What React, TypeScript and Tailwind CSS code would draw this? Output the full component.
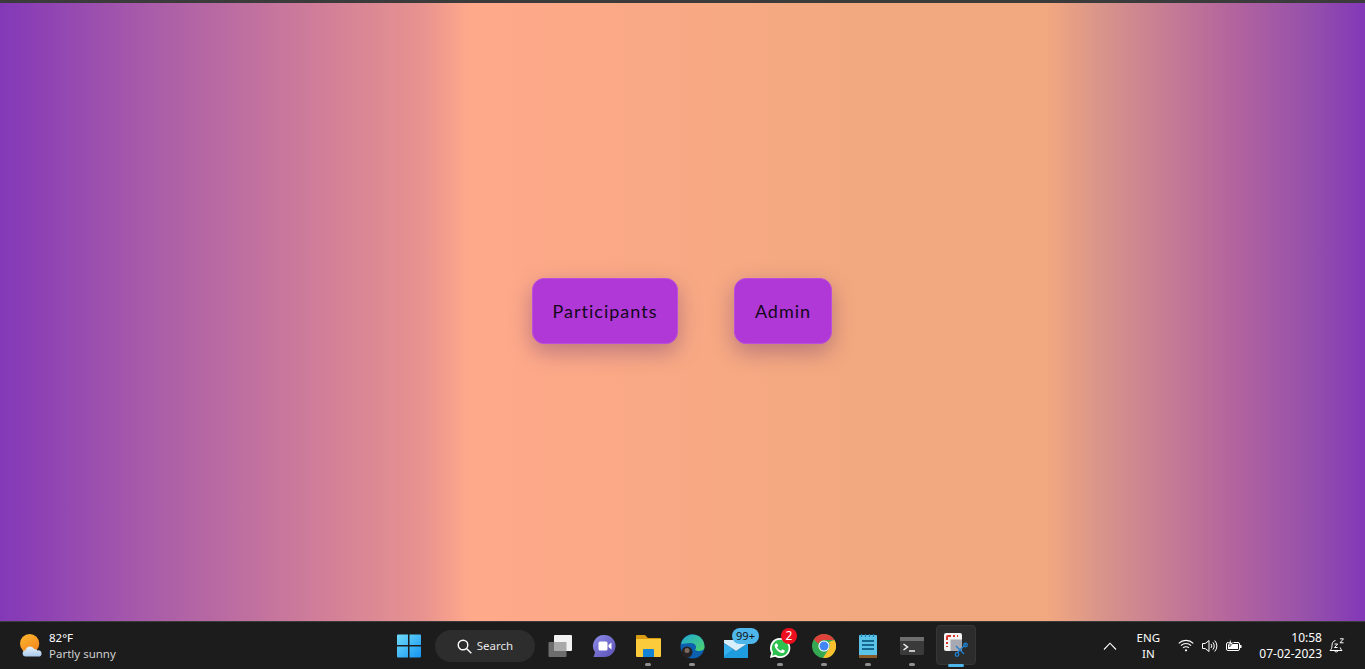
const font = { fontFamily: '"Noto Sans", sans-serif' };

function Dot() {
    return <span className="absolute bottom-[4px] left-1/2 -translate-x-1/2 w-[6px] h-[3px] rounded-full bg-[#8f8f8f]" />;
}

function Slot({ children, running = true }: { children: React.ReactNode; running?: boolean }) {
    return (
        <div className="relative w-11 h-12 flex items-center justify-center">
            {children}
            {running && <Dot />}
        </div>
    );
}

function Weather() {
    return (
        <svg width="22" height="23" viewBox="0 0 24 25">
            <defs>
                <linearGradient id="sun" x1="0" y1="0" x2="0.6" y2="1">
                    <stop offset="0" stopColor="#fdb92e" />
                    <stop offset="1" stopColor="#f5861f" />
                </linearGradient>
                <linearGradient id="cloud" x1="0" y1="0" x2="0" y2="1">
                    <stop offset="0" stopColor="#e8f3fc" />
                    <stop offset="1" stopColor="#a9c9ea" />
                </linearGradient>
            </defs>
            <circle cx="10.500" cy="10.500" r="10.500" fill="url(#sun)" />
            <path d="M6.500 24.500a3.400 3.400 0 0 1-.4-6.800 5 5 0 0 1 9.400-1.400 4.200 4.200 0 0 1 3.400 1.600 3.300 3.300 0 0 1 4.600 3.200 3.300 3.300 0 0 1-3.300 3.400z" fill="url(#cloud)" />
        </svg>
    );
}

function WinLogo() {
    return (
        <svg width="24" height="24" viewBox="0 0 24 24">
            <defs>
                <linearGradient id="win" x1="0" y1="0" x2="1" y2="1">
                    <stop offset="0" stopColor="#6fdcfb" />
                    <stop offset="1" stopColor="#1594f2" />
                </linearGradient>
            </defs>
            <path d="M1 0.500h10v10.500H0V1.500a1 1 0 0 1 1-1zM12.500 0.500H23a1 1 0 0 1 1 1V11H12.500zM0 12.500h11V23.500H1a1 1 0 0 1-1-1zM12.500 12.500H24V22.500a1 1 0 0 1-1 1H12.500z" fill="url(#win)" />
        </svg>
    );
}

function TaskView() {
    return (
        <svg width="24" height="22" viewBox="0 0 24 22">
            <rect x="0.500" y="7" width="18" height="15" rx="1" fill="#6d6d6d" />
            <rect x="6" y="0" width="18" height="16" rx="1" fill="#f2f2f2" />
            <rect x="6" y="7" width="12.500" height="9" fill="#a9a9a9" />
        </svg>
    );
}

function Meet() {
    return (
        <svg width="24" height="24" viewBox="0 0 24 24">
            <defs>
                <linearGradient id="meet" x1="0" y1="0" x2="1" y2="1">
                    <stop offset="0" stopColor="#8d8ce8" />
                    <stop offset="1" stopColor="#5a4fb5" />
                </linearGradient>
            </defs>
            <path d="M12.500 1a11 11 0 1 1 0 22H1.500l1.600-4.500A11 11 0 0 1 12.500 1z" fill="url(#meet)" />
            <rect x="6.500" y="7.500" width="9" height="9" rx="1.500" fill="#fff" />
            <path d="M16.500 11l3-2.500v7l-3-2.500z" fill="#fff" />
        </svg>
    );
}

function Folder() {
    return (
        <svg width="25" height="22" viewBox="0 0 25 22">
            <path d="M1 0h8l3 3h12a1 1 0 0 1 1 1v3H0V1a1 1 0 0 1 1-1z" fill="#d99c12" />
            <path d="M0 4h25v17a1 1 0 0 1-1 1H1a1 1 0 0 1-1-1z" fill="#fbcb3c" />
            <path d="M7 15a1 1 0 0 1 1-1h9a1 1 0 0 1 1 1v7H7z" fill="#1283d4" />
        </svg>
    );
}

function Edge() {
    return (
        <svg width="25" height="25" viewBox="0 0 25 25">
            <defs>
                <linearGradient id="edge" x1="0" y1="0" x2="1" y2="1">
                    <stop offset="0" stopColor="#1fa6d6" />
                    <stop offset="1" stopColor="#4fd46a" />
                </linearGradient>
            </defs>
            <circle cx="12.500" cy="12.500" r="12" fill="#0d5fb0" />
            <path d="M1 10C3 3 8 .5 12.500 .5 20 .5 24.500 6 24.500 13c0 3-3 4-6 4-2 0-4-1-3-2 2-3-1-6-5-6-4 0-7 1-9.500 1z" fill="url(#edge)" />
            <circle cx="7" cy="18" r="5.500" fill="#262222" />
            <circle cx="7" cy="16.500" r="2.500" fill="#7a6a60" />
        </svg>
    );
}

function Mail() {
    return (
        <svg width="24" height="18" viewBox="0 0 24 18">
            <path d="M0 3l12 8 12-8v15H0z" fill="#1f9be0" />
            <path d="M0 0h24v3L12 11 0 3z" fill="#d8eefb" />
            <path d="M0 4l9 5-9 7z" fill="#39b0ee" />
        </svg>
    );
}

function WhatsApp() {
    return (
        <svg width="22" height="22" viewBox="0 0 24 24">
            <path d="M12 1a11 11 0 0 0-9.500 16.500L1 23l5.700-1.500A11 11 0 1 0 12 1z" fill="#fff" />
            <path d="M12 3a9 9 0 0 0-7.600 13.700L3.600 20.400l3.700-1A9 9 0 1 0 12 3z" fill="#2fc14f" />
            <path d="M9 7.500c-.5-.8-1-.7-1.500-.5C6.500 7.500 6 8.500 6.300 10c.5 2.500 3.500 6 7 7.300 1.800.6 3.200-.3 3.700-1.300.3-.7.300-1.200 0-1.400l-2-1c-.4-.2-.7 0-1 .4l-.6.700c-.3.3-.6.300-1 .1-1.500-.7-2.800-2-3.500-3.300-.2-.4 0-.6.300-.9l.5-.6c.2-.3.2-.6.100-.9z" fill="#fff" />
        </svg>
    );
}

function Chrome() {
    return (
        <svg width="24" height="24" viewBox="0 0 24 24">
            <circle cx="12" cy="12" r="12" fill="#34a853" />
            <path d="M12 0a12 12 0 0 1 10.400 6H12a6 6 0 0 0-5.600 3.800L1.900 5.500A12 12 0 0 1 12 0z" fill="#e0413a" />
            <path d="M22.400 6A12 12 0 0 1 11 24l5.400-8.500A6 6 0 0 0 16.800 8z" fill="#fbc02d" />
            <circle cx="12" cy="12" r="5.600" fill="#fff" />
            <circle cx="12" cy="12" r="4.500" fill="#4285f4" />
        </svg>
    );
}

function Notepad() {
    return (
        <svg width="18" height="24" viewBox="0 0 18 24">
            <rect x="0" y="1" width="18" height="23" rx="1" fill="#5cc3e8" />
            <rect x="0" y="21" width="18" height="3" fill="#8a5a2a" />
            <path d="M2.500 0v3M6.500 0v3M10.500 0v3M14.500 0v3" stroke="#1a7fb0" strokeWidth="1.200" />
            <path d="M3 7h12M3 11h12M3 15h12" stroke="#12688f" strokeWidth="1.800" />
        </svg>
    );
}

function Terminal() {
    return (
        <svg width="24" height="18" viewBox="0 0 24 18">
            <rect width="24" height="18" rx="1.500" fill="#3a3a3a" />
            <rect width="24" height="4" fill="#6e6e6e" />
            <path d="M3.500 7l4 3-4 3" fill="none" stroke="#f0f0f0" strokeWidth="1.500" />
            <path d="M9 14h6" stroke="#f0f0f0" strokeWidth="1.500" />
        </svg>
    );
}

function Snip() {
    return (
        <svg width="24" height="24" viewBox="0 0 24 24">
            <rect x="0" y="0" width="18" height="18" rx="2" fill="#f4f4f4" />
            <path d="M3 7V4a1 1 0 0 1 1-1h3M9 3h2M13 3h1M3 9v2M3 13v1" stroke="#d8362a" strokeWidth="2" fill="none" />
            <rect x="6.500" y="6.500" width="11.500" height="11.500" fill="#a8a8b0" />
            <path d="M12 13l8 8M22 11l-9 9" stroke="#1f7fd0" strokeWidth="1.300" />
            <circle cx="21.500" cy="12" r="1.800" fill="none" stroke="#1f7fd0" strokeWidth="1.300" />
            <circle cx="13" cy="21.500" r="1.800" fill="none" stroke="#1f7fd0" strokeWidth="1.300" />
        </svg>
    );
}

function Wifi() {
    return (
        <svg width="16" height="13" viewBox="0 0 16 13" fill="none" stroke="#fff" strokeWidth="1.100">
            <path d="M.7 4.300a10.500 10.500 0 0 1 14.600 0" />
            <path d="M2.900 6.600a7.300 7.300 0 0 1 10.200 0" />
            <path d="M5.100 8.900a4.100 4.100 0 0 1 5.800 0" />
            <circle cx="8" cy="11.300" r="1.100" fill="#fff" stroke="none" />
        </svg>
    );
}

function Speaker() {
    return (
        <svg width="16" height="14" viewBox="0 0 16 14" fill="none" stroke="#fff" strokeWidth="1">
            <path d="M.5 4.500h2.700L7 1.500v11L3.200 9.500H.5z" />
            <path d="M9 5a3 3 0 0 1 0 4" />
            <path d="M10.800 3.300a5.500 5.500 0 0 1 0 7.400" />
            <path d="M12.700 1.500a8 8 0 0 1 0 11" />
        </svg>
    );
}

function Battery() {
    return (
        <svg width="16" height="13" viewBox="0 0 16 13">
            <rect x="0.500" y="3.500" width="13" height="8" rx="1.500" fill="none" stroke="#fff" />
            <rect x="2" y="5" width="10" height="5" fill="#fff" />
            <rect x="14" y="6" width="1.500" height="3" fill="#fff" />
            <path d="M5 0L2 5h2.500L3.500 8 7.500 3.500H5z" fill="#fff" stroke="#1c1c1c" strokeWidth="0.600" />
        </svg>
    );
}

function Bell() {
    return (
        <svg width="16" height="16" viewBox="0 0 16 16" fill="none" stroke="#fff" strokeWidth="1">
            <path d="M6.500 2.500C4 3 3 5 3 7.500c0 2.500-.6 3.800-2 5h12c-1-.9-1.500-1.800-1.700-3" />
            <path d="M5.500 12.800a2 2 0 0 0 3.600 0" />
            <path d="M5.500 6h3.200L5.500 9.500h3.200" />
            <path d="M11 .8h3.500L11 4.800h3.500" />
        </svg>
    );
}

export default function App() {
    return (
        <div className="w-[1365px] h-[669px] flex flex-col overflow-hidden" style={font}>
            <div className="h-[3px] bg-[#3b3b3b]" />

            <main className="flex-1 flex items-center justify-center gap-14 pr-px pb-[2px] bg-[linear-gradient(90deg,#8338b8_0%,#a659aa_10%,#e8938f_31%,#ffa98b_34.500%,#f3a97f_62%,#f3a97f_76.500%,#d9958a_80.500%,#b5659d_90%,#9550ab_96%,#8338b8_100%)]">
                <button className="h-[66px] w-[146px] rounded-xl bg-[#b038d6] border border-[#b94fdc] text-[18px] text-[#14081c] tracking-[1px] shadow-[0_8px_22px_rgba(90,40,110,0.38)]" style={{ fontFamily: "Lato, sans-serif" }}>
                    Participants
                </button>
                <button className="h-[66px] w-[98px] rounded-xl bg-[#b038d6] border border-[#b94fdc] text-[18px] text-[#14081c] tracking-[1px] shadow-[0_8px_22px_rgba(90,40,110,0.38)]" style={{ fontFamily: "Lato, sans-serif" }}>
                    Admin
                </button>
            </main>

            <footer className="relative h-12 shrink-0 flex items-center justify-between bg-[#1c1c1c] border-t border-[#3a3a3a] text-white">
                <div className="flex items-center gap-[7px] pl-[20px] w-[387px]">
                    <Weather />
                    <div className="text-[11.500px] leading-[16px]">
                        <div>82°F</div>
                        <div className="text-[#d0d0d0]">Partly sunny</div>
                    </div>
                </div>

                <div className="absolute left-[387px] top-0 flex items-center">
                    <Slot running={false}><WinLogo /></Slot>
                    <div className="ml-1 mr-[3px] w-[100px] h-[32px] rounded-full bg-[#2d2d2d] flex items-center justify-center gap-[5px] text-[11.500px] text-[#e6e6e6]">
                        <svg width="15" height="15" viewBox="0 0 15 15" fill="none" stroke="#fff" strokeWidth="1.400">
                            <circle cx="6" cy="6" r="4.800" />
                            <path d="M9.500 9.500l4.800 4.800" />
                        </svg>
                        Search
                    </div>
                    <Slot running={false}><TaskView /></Slot>
                    <Slot running={false}><Meet /></Slot>
                    <Slot><Folder /></Slot>
                    <Slot><Edge /></Slot>
                    <Slot running={false}>
                        <div className="mt-[5px]"><Mail /></div>
                        <span className="absolute top-[6px] left-[18px] w-[27px] h-[16px] rounded-full bg-[#4fb6ec] text-[#111] text-[11px] leading-[16px] text-center">99+</span>
                    </Slot>
                    <Slot>
                        <div className="mt-[4px]"><WhatsApp /></div>
                        <span className="absolute top-[6px] left-[23px] w-[16px] h-[16px] rounded-full bg-[#f00f1e] text-white text-[12px] leading-[16px] text-center">2</span>
                    </Slot>
                    <Slot><Chrome /></Slot>
                    <Slot><Notepad /></Slot>
                    <Slot><Terminal /></Slot>
                    <Slot running={false}>
                        <div className="absolute left-[2px] top-[3px] w-10 h-10 rounded-[4px] bg-[#2c2c2c] border border-[#363636]" />
                        <div className="relative -mt-[2px]"><Snip /></div>
                        <span className="absolute bottom-[3px] left-1/2 -translate-x-1/2 w-4 h-[3px] rounded-full bg-[#4fb6ec]" />
                    </Slot>
                </div>

                <div className="flex items-center pr-[20px] text-[11.500px]">
                    <svg width="14" height="8" viewBox="0 0 14 8" fill="none" stroke="#fff" strokeWidth="1.100">
                        <path d="M1 7.500L7 1.200l6 6.300" />
                    </svg>
                    <div className="ml-[16px] w-[30px] text-center leading-[16px]">
                        <div>ENG</div>
                        <div>IN</div>
                    </div>
                    <div className="ml-[15px] flex items-center gap-2">
                        <Wifi />
                        <Speaker />
                        <Battery />
                    </div>
                    <div className="ml-[17px] text-right text-[12px] leading-[16px]">
                        <div>10:58</div>
                        <div>07-02-2023</div>
                    </div>
                    <div className="ml-[7px]"><Bell /></div>
                </div>
            </footer>
        </div>
    );
}
